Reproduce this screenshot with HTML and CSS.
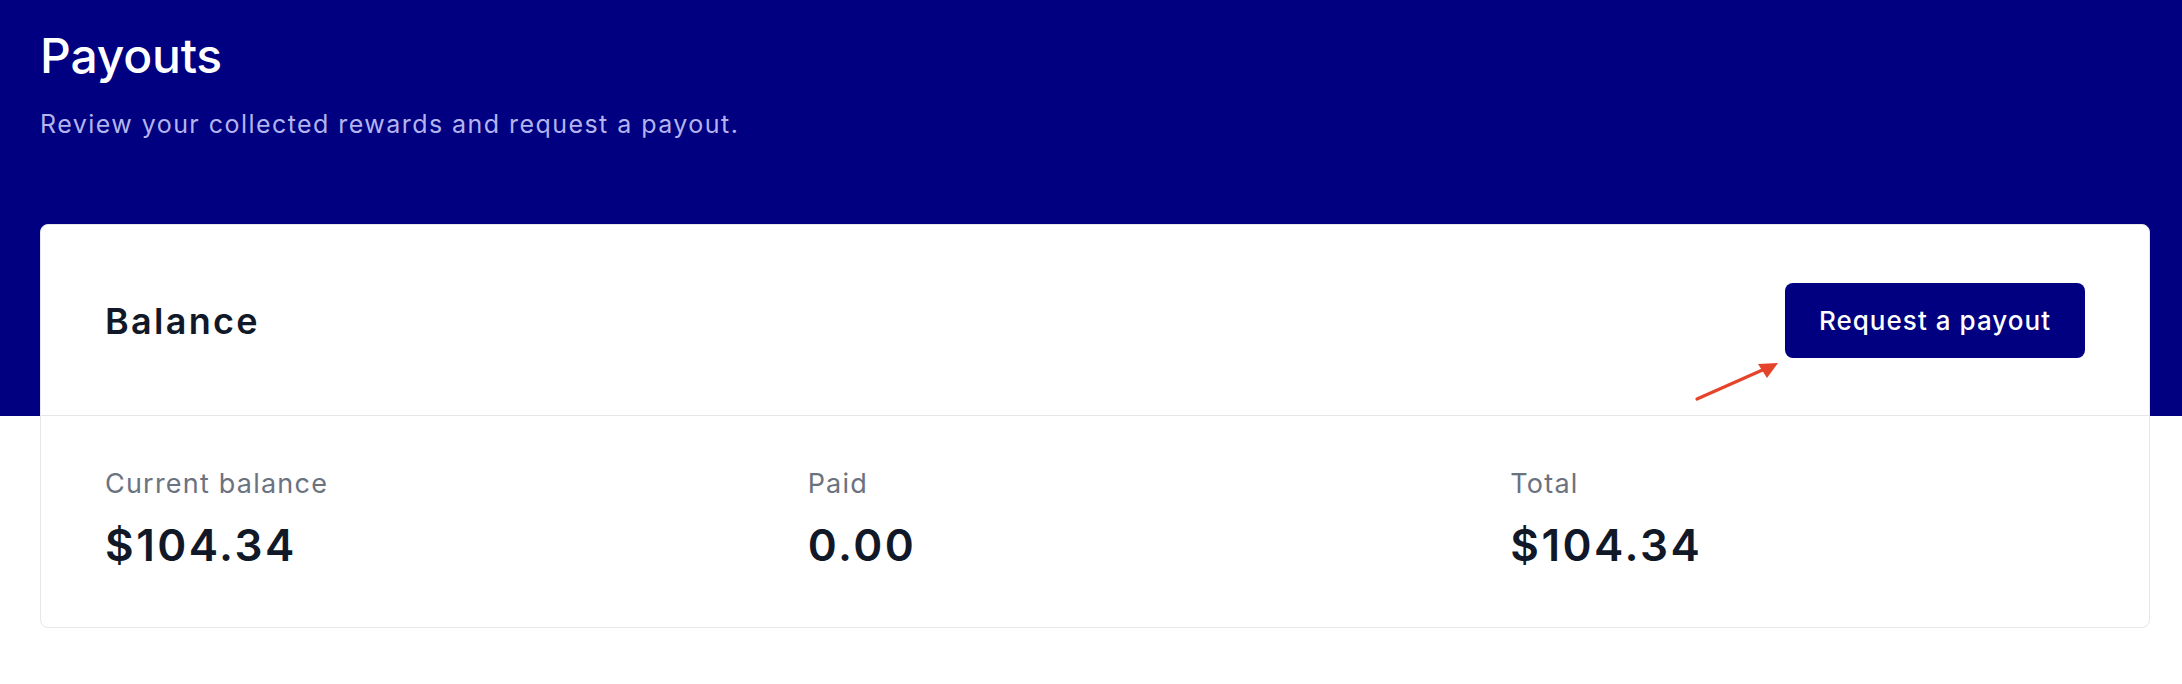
FILE: index.html
```html
<!DOCTYPE html>
<html lang="en">
<head>
<meta charset="utf-8">
<title>Payouts</title>
<link rel="stylesheet" href="styles.css">
</head>
<body>
<div class="page">
  <header class="page-header">
    <h1 class="title">Payouts</h1>
    <p class="subtitle">Review your collected rewards and request a payout.</p>
  </header>
  <section class="card">
    <div class="card-head">
      <h2 class="card-title">Balance</h2>
      <button class="btn">Request a payout</button>
      <svg class="annot" width="90" height="44" viewBox="0 0 90 44">
        <line x1="6" y1="40" x2="76" y2="9" stroke="#e5432a" stroke-width="3.2" stroke-linecap="round"/>
        <polygon points="87,4 67,5 76,19" fill="#e5432a"/>
      </svg>
    </div>
    <div class="stats">
      <div class="stat">
        <div class="stat-label">Current balance</div>
        <div class="stat-value">$104.34</div>
      </div>
      <div class="stat">
        <div class="stat-label">Paid</div>
        <div class="stat-value">0.00</div>
      </div>
      <div class="stat">
        <div class="stat-label">Total</div>
        <div class="stat-value">$104.34</div>
      </div>
    </div>
  </section>
</div>
</body>
</html>
```

FILE: styles.css
```css
* { box-sizing: border-box; }
html, body { margin: 0; padding: 0; }
body {
  font-family: Inter, "Noto Sans", "Liberation Sans", sans-serif;
  background: linear-gradient(#000080 0, #000080 416px, #ffffff 416px);
  min-height: 684px;
}
.page {
  padding: 0 32px 0 40px;
}
.page-header {
  padding-top: 27px;
  height: 224px;
}
.title {
  margin: 0;
  font-size: 48px;
  line-height: 58px;
  font-weight: 500;
  color: #ffffff;
  letter-spacing: -0.2px;
}
.subtitle {
  margin: 21px 0 0;
  font-size: 25px;
  line-height: 36px;
  color: #b3b3ee;
  letter-spacing: 0.058em;
}
.card {
  background: #ffffff;
  border: 1px solid #e5e7eb;
  border-radius: 8px;
}
.card-head {
  position: relative;
  display: flex;
  align-items: center;
  justify-content: space-between;
  padding: 58px 64px 57px 64px;
  border-bottom: 1px solid #e5e7eb;
}
.card-title {
  margin: 0;
  font-size: 36px;
  line-height: 44px;
  font-weight: 600;
  color: #111827;
  letter-spacing: 0.064em;
}
.btn {
  height: 75px;
  width: 300px;
  border: 0;
  border-radius: 8px;
  background: #000080;
  color: #ffffff;
  font-family: inherit;
  font-size: 26px;
  font-weight: 500;
  letter-spacing: 0.04em;
  padding: 0;
}
.annot {
  position: absolute;
  left: 1650px;
  top: 134px;
}
.stats {
  display: grid;
  grid-template-columns: repeat(3, 1fr);
}
.stat {
  padding: 48px 64px 55px;
}
.stat-label {
  font-size: 27px;
  line-height: 39px;
  color: #6b7280;
  letter-spacing: 0.045em;
}
.stat-value {
  margin-top: 16px;
  font-size: 44px;
  line-height: 53px;
  font-weight: 600;
  color: #111827;
  letter-spacing: 0.057em;
}
```
